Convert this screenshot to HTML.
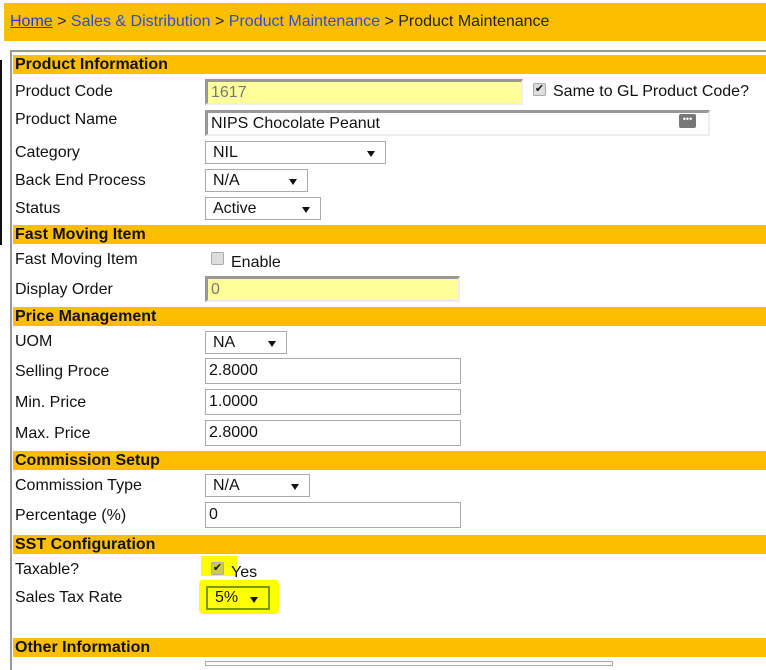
<!DOCTYPE html>
<html><head><style>
*{box-sizing:border-box;margin:0;padding:0}
body{width:766px;height:664px;overflow:hidden;background:#fff;font-family:"Liberation Sans",sans-serif;font-size:16px;color:#111;position:relative}
.a{position:absolute}
.top{left:3px;top:3px;width:763px;height:38px;background:#fdbe00;border-left:1px solid #fff}
.bc{left:10px;top:13px;color:#2a4fd6;white-space:nowrap}
.bc u{color:#1a3fe0}
.bc .g{color:#222}
.box{left:10px;top:50px;width:760px;height:620px;border:2px solid #999;border-right:none;border-bottom:none}
.h{left:13px;width:753px;height:19px;background:#fdbe00;font-weight:bold;padding-left:2px;line-height:19px;color:#111}
.l{left:15px;line-height:18px}
.in{left:205px;border:1px solid #aaa;background:#fff;padding-left:3px;display:flex;align-items:center}
.y{background:#ffff99;border-top:3px solid #999;border-left:3px solid #999;border-right:2px solid #eee;border-bottom:2px solid #eee;color:#777}
.sel{left:205px;border:1px solid #aaa;background:#fff;padding-left:7px;display:flex;align-items:center}
.sel:after{content:"";position:absolute;right:10px;top:9px;border-left:4px solid transparent;border-right:4px solid transparent;border-top:6px solid #111}
.cb{width:13px;height:13px;border:1px solid #aaa;border-radius:2px;background:#ddd}
</style></head><body>
<div class="a" style="left:0;top:60px;width:2px;height:185px;background:#111"></div>
<div class="a top"></div>
<div class="a bc"><u>Home</u> <span class="g">&gt;</span> Sales &amp; Distribution <span class="g">&gt;</span> Product Maintenance <span class="g">&gt; Product Maintenance</span></div>
<div class="a box"></div>

<div class="a h" style="top:55px">Product Information</div>
<div class="a l" style="top:83px">Product Code</div>
<div class="a in y" style="top:79px;width:318px;height:26px">1617</div>
<div class="a cb" style="left:533px;top:83px;font-size:11px;line-height:11px;text-align:center">✔</div>
<div class="a" style="left:553px;top:83px">Same to GL Product Code?</div>
<div class="a l" style="top:111px">Product Name</div>
<div class="a in y" style="top:110px;width:505px;height:26px;background:#fff;color:#111">NIPS Chocolate Peanut</div>
<div class="a" style="left:679px;top:114px;width:17px;height:14px;background:#777;border-radius:2px;color:#fff;font-size:9px;line-height:11px;text-align:center">•••</div>
<div class="a l" style="top:144px">Category</div>
<div class="a sel" style="top:141px;width:181px;height:23px">NIL</div>
<div class="a l" style="top:172px">Back End Process</div>
<div class="a sel" style="top:169px;width:103px;height:23px">N/A</div>
<div class="a l" style="top:200px">Status</div>
<div class="a sel" style="top:197px;width:116px;height:23px">Active</div>

<div class="a h" style="top:225px">Fast Moving Item</div>
<div class="a l" style="top:251px">Fast Moving Item</div>
<div class="a cb" style="left:211px;top:252px"></div>
<div class="a" style="left:231px;top:254px">Enable</div>
<div class="a l" style="top:281px">Display Order</div>
<div class="a in y" style="top:276px;width:255px;height:26px">0</div>

<div class="a h" style="top:307px">Price Management</div>
<div class="a l" style="top:333px">UOM</div>
<div class="a sel" style="top:331px;width:82px;height:23px">NA</div>
<div class="a l" style="top:363px">Selling Proce</div>
<div class="a in" style="top:358px;width:256px;height:26px">2.8000</div>
<div class="a l" style="top:394px">Min. Price</div>
<div class="a in" style="top:389px;width:256px;height:26px">1.0000</div>
<div class="a l" style="top:425px">Max. Price</div>
<div class="a in" style="top:420px;width:256px;height:26px">2.8000</div>

<div class="a h" style="top:451px">Commission Setup</div>
<div class="a l" style="top:477px">Commission Type</div>
<div class="a sel" style="top:474px;width:105px;height:23px">N/A</div>
<div class="a l" style="top:507px">Percentage (%)</div>
<div class="a in" style="top:502px;width:256px;height:26px">0</div>

<div class="a h" style="top:535px">SST Configuration</div>
<div class="a l" style="top:561px">Taxable?</div>
<div class="a" style="left:201px;top:556px;width:36px;height:20px;background:#ffff00"></div>
<div class="a cb" style="left:211px;top:562px;font-size:11px;line-height:11px;text-align:center;background:#cc4">✔</div>
<div class="a" style="left:231px;top:564px">Yes</div>
<div class="a l" style="top:589px">Sales Tax Rate</div>
<div class="a" style="left:199px;top:580px;width:80px;height:34px;background:#ffff00;border-radius:4px"></div>
<div class="a sel" style="top:586px;left:206px;width:64px;height:24px;border:2px solid #7a9a00;background:#ffff00">5%</div>

<div class="a h" style="top:638px">Other Information</div>
<div class="a" style="left:205px;top:661px;width:408px;height:5px;border:1px solid #aaa"></div>
</body></html>
